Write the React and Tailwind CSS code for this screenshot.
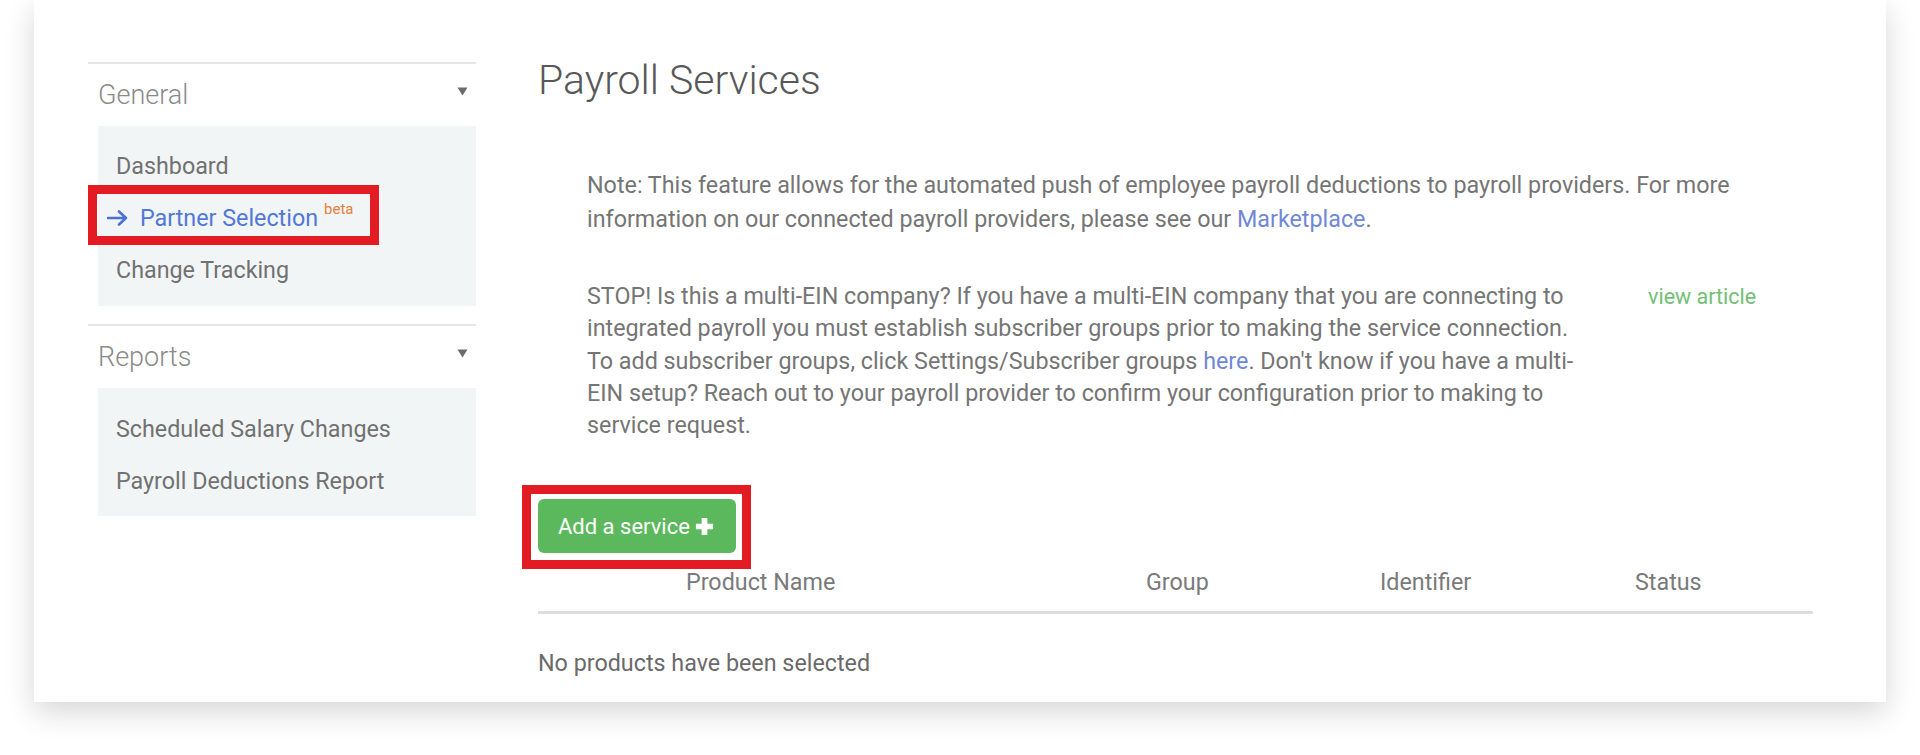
import React from "react";

const font = { fontFamily: "Roboto, 'Liberation Sans', sans-serif" };

function Caret() {
  return (
    <svg width="11" height="9" viewBox="0 0 11 9" className="mb-[8px]">
      <path d="M0.5 0.5 L10.5 0.5 L5.5 8.5 Z" fill="#6b6b6b" />
    </svg>
  );
}

function SectionHeader({ title }) {
  return (
    <div className="flex h-[62px] items-center justify-between pl-[10px] pr-[8px]">
      <span className="text-[27px] font-light text-[#8a8a8a]">{title}</span>
      <Caret />
    </div>
  );
}

function Item({ children }) {
  return (
    <div className="flex h-[52px] items-center pl-[18px] text-[23.3px] text-[#717171]">
      {children}
    </div>
  );
}

export default function App() {
  return (
    <div className="min-h-[755px] w-full bg-white" style={font}>
      <div className="ml-[34px] w-[1852px] bg-white shadow-[0_10px_28px_rgba(0,0,0,0.16)]">
        <div className="flex pl-[54px] pr-[73px] pt-[56px] pb-[24px]">
          {/* Sidebar */}
          <aside className="w-[388px] shrink-0 pt-[6px]">
            <div className="h-[2px] bg-[#e6e6e6]" />
            <SectionHeader title="General" />
            <div className="ml-[10px] bg-[#f2f5f6] pt-[14px] pb-[10px]">
              <Item>Dashboard</Item>
              <div className="relative flex h-[52px] items-center pl-[9px] text-[23.3px] text-[#5178d6]">
                <svg width="21" height="16" viewBox="0 0 21 16" className="mr-[12px]">
                  <path d="M1 8 H19 M12 1.5 L19 8 L12 14.5" fill="none" stroke="#4a72d6" strokeWidth="2.6" strokeLinecap="round" strokeLinejoin="round" />
                </svg>
                <span>Partner Selection</span>
                <span className="relative top-[-9px] ml-[6px] text-[15px] leading-none text-[#e67e3c]">beta</span>
                <div className="pointer-events-none absolute left-[-10px] top-[-7px] h-[60px] w-[291px] border-[9px] border-[#e31b23]" />
              </div>
              <Item>Change Tracking</Item>
            </div>
            <div className="mt-[18px] h-[2px] bg-[#e6e6e6]" />
            <SectionHeader title="Reports" />
            <div className="ml-[10px] bg-[#f2f5f6] pt-[15px] pb-[9px]">
              <Item>Scheduled Salary Changes</Item>
              <Item>Payroll Deductions Report</Item>
            </div>
          </aside>

          {/* Main */}
          <main className="ml-[62px] flex-1 text-[#757575]">
            <h1 className="h-[48px] text-[41px] font-light leading-[48px] text-[#585858]">
              Payroll Services
            </h1>
            <div className="pl-[49px] pt-[64px] text-[23.3px] leading-[34px]">
              <p>
                Note: This feature allows for the automated push of employee payroll deductions to payroll providers. For more
                <br />
                information on our connected payroll providers, please see our{" "}
                <span className="text-[#7088d6]">Marketplace</span>.
              </p>
              <div className="mt-[44px] flex leading-[32.3px]">
                <p className="w-[1030px] shrink-0">
                  STOP! Is this a multi-EIN company? If you have a multi-EIN company that you are connecting to
                  <br />
                  integrated payroll you must establish subscriber groups prior to making the service connection.
                  <br />
                  To add subscriber groups, click Settings/Subscriber groups{" "}
                  <span className="text-[#7088d6]">here</span>. Don't know if you have a multi-
                  <br />
                  EIN setup? Reach out to your payroll provider to confirm your configuration prior to making to
                  <br />
                  service request.
                </p>
                <span className="ml-[31px] mt-[1px] text-[21.5px] text-[#72c075]">view article</span>
              </div>
            </div>

            <div className="mt-[58px]">
              <div className="relative inline-flex">
                <button className="flex h-[54px] w-[198px] items-center gap-[4px] rounded-[6px] bg-[#5cb85c] pl-[20px] text-[22px] text-white">
                  Add a service
                  <svg width="21" height="21" viewBox="0 0 22 22">
                    <path d="M11 2 V20 M2 11 H20" stroke="white" strokeWidth="6" />
                  </svg>
                </button>
                <div className="pointer-events-none absolute left-[-16px] top-[-14px] h-[84px] w-[229px] border-[9px] border-[#e31b23]" />
              </div>
            </div>

            <div className="grid h-[58px] grid-cols-[148px_460px_234px_255px_1fr] items-center text-[23.3px] text-[#7a7a7a]">
              <span />
              <span>Product Name</span>
              <span>Group</span>
              <span>Identifier</span>
              <span>Status</span>
            </div>
            <div className="h-[3px] bg-[#dddddd]" />
            <div className="pt-[34px] text-[23.3px] leading-[30px] text-[#6a6a6a]">
              No products have been selected
            </div>
          </main>
        </div>
      </div>
    </div>
  );
}
